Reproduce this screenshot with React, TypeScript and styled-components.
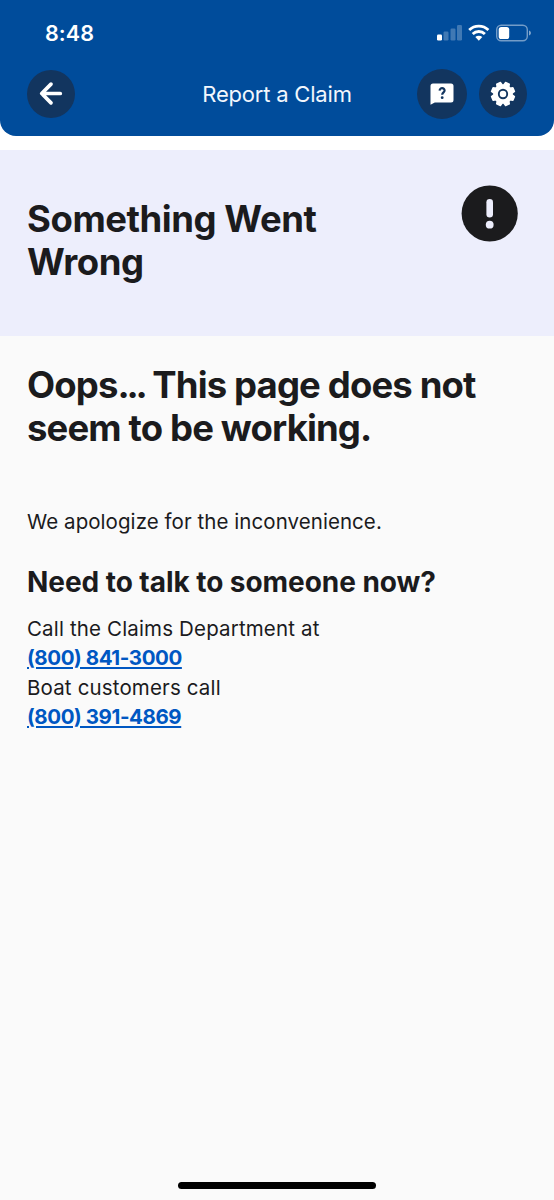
import React from "react";
import styled, { createGlobalStyle } from "styled-components";

const GlobalStyle = createGlobalStyle`
  * { box-sizing: border-box; }
  body { margin: 0; background: #fafafa; font-family: Inter, "Liberation Sans", sans-serif; color: #1b1b1d; }
  h1, h2, h3, p { margin: 0; }
`;

const Screen = styled.div`
  display: flex;
  flex-direction: column;
  height: 1200px;
  background: #fafafa;
`;

const HeaderWrap = styled.div`
  background: #fff;
  padding-bottom: 14px;
`;

const Header = styled.header`
  height: 136px;
  background: #004c9b;
  border-radius: 0 0 16px 16px;
`;

const StatusBar = styled.div`
  display: flex;
  align-items: center;
  justify-content: space-between;
  height: 66px;
  padding: 0 23px 0 45px;
`;

const Clock = styled.span`
  color: #fff;
  font-size: 21.5px;
  font-weight: 580;
  line-height: 26px;
  letter-spacing: 0.1px;
`;

const NavBar = styled.nav`
  display: flex;
  align-items: center;
  height: 56px;
  padding: 0 27px;
`;

const Side = styled.div<{ $end?: boolean }>`
  display: flex;
  flex: 1;
  align-items: center;
  gap: 12px;
  justify-content: ${(p) => (p.$end ? "flex-end" : "flex-start")};
`;

const RoundButton = styled.button<{ $size: number }>`
  display: flex;
  align-items: center;
  justify-content: center;
  width: ${(p) => p.$size}px;
  height: ${(p) => p.$size}px;
  padding: 0;
  border: 0;
  border-radius: 50%;
  background: #12355f;
`;

const Title = styled.span`
  color: #f2f7fd;
  font-size: 22px;
  line-height: 28px;
  letter-spacing: -0.2px;
`;

const Hero = styled.section`
  display: flex;
  justify-content: space-between;
  align-items: flex-start;
  height: 186px;
  padding: 35px 36px 0 27px;
  background: #edeefc;
`;

const Heading = styled.h1<{ $tracking: number }>`
  font-size: 36.5px;
  font-weight: 700;
  line-height: 43px;
  letter-spacing: ${(p) => p.$tracking}px;
`;

const HeroHeading = styled(Heading)`
  width: 320px;
  padding-top: 13px;
`;

const Ellipsis = styled.span`
  letter-spacing: -3.2px;
`;

const Content = styled.main`
  flex: 1;
  padding: 28px 27px 0;
`;

const Apology = styled.p`
  margin-top: 57px;
  font-size: 20.5px;
  line-height: 29.5px;
  letter-spacing: 0.06px;
`;

const Subheading = styled.h3`
  margin-top: 28px;
  font-size: 28px;
  font-weight: 700;
  line-height: 34px;
  letter-spacing: -0.05px;
`;

const Contacts = styled.div`
  display: flex;
  flex-direction: column;
  align-items: flex-start;
  margin-top: 15px;
  font-size: 20.5px;
  line-height: 29.5px;
  letter-spacing: 0.15px;
`;

const Phone = styled.a`
  color: #0057c2;
  font-weight: 700;
  letter-spacing: -0.42px;
  text-decoration: underline;
  text-decoration-thickness: 1.5px;
  text-underline-offset: 2px;
`;

const HomeArea = styled.footer`
  display: flex;
  justify-content: center;
  height: 18px;
`;

const HomeIndicator = styled.div`
  width: 198px;
  height: 7px;
  border-radius: 4px;
  background: #000;
`;

const StatusIcons = () => (
  <svg width="95" height="20" viewBox="436 23.5 95 20" fill="#fff">
    <rect x="437" y="35" width="5" height="6" rx="1.2" />
    <g fillOpacity=".25">
      <rect x="443.5" y="32" width="5" height="9" rx="1.2" />
      <rect x="450.5" y="29" width="5" height="12" rx="1.2" />
      <rect x="457" y="25.5" width="5" height="15.5" rx="1.2" />
    </g>
    <g fill="none" stroke="#fff" strokeWidth="2.8">
      <path d="M469.2 30.6a13.8 13.8 0 0 1 19.2 0" />
      <path d="M472.7 34.5a8.7 8.7 0 0 1 12.2 0" />
    </g>
    <path d="M475.3 37.6a5 5 0 0 1 7 0L478.8 41.2z" />
    <rect x="496.7" y="25.7" width="30.6" height="15.6" rx="4.5" fill="none" stroke="#fff" strokeOpacity=".45" strokeWidth="1.4" />
    <rect x="498.7" y="27.5" width="10.5" height="12" rx="2.6" />
    <path d="M529 31c2.6.8 2.6 4.2 0 5z" fillOpacity=".5" />
  </svg>
);

const BackIcon = () => (
  <svg width="26" height="26" viewBox="0 0 26 26" fill="none" stroke="#fff" strokeWidth="3.7" strokeLinecap="round" strokeLinejoin="round">
    <path d="M22.3 12.5H4M13 3.1L3.7 12.5l9.3 9.4" />
  </svg>
);

const HelpIcon = () => (
  <svg width="24" height="22" viewBox="0 0 24 22">
    <path d="M3 .5h18A2.5 2.5 0 0 1 23.5 3v14a2.5 2.5 0 0 1-2.5 2.5H4.800L.5 21.800V3A2.5 2.5 0 0 1 3 .5z" fill="#fff" />
    <path d="M9.600 7.600c.1-3.400 5.100-3.100 5 0 0 1.700-2.400 1.900-2.400 4.100" fill="none" stroke="#12355f" strokeWidth="2.2" />
    <circle cx="12.2" cy="14.700" r="1.400" fill="#12355f" />
  </svg>
);

const GearIcon = () => (
  <svg width="26" height="26" viewBox="-13 -13 26 26">
    <circle r="9.800" fill="#fff" />
    {[0, 45, 90, 135, 180, 225, 270, 315].map((a) => (
      <path key={a} d="M-3.500-8.500L-2.700-11.800Q-2.500-12.300-2-12.300H2Q2.500-12.300 2.700-11.800L3.500-8.500z" fill="#fff" transform={`rotate(${a + 22.5})`} />
    ))}
    <circle r="4.200" fill="none" stroke="#12355f" strokeWidth="1.900" />
  </svg>
);

const AlertIcon = () => (
  <svg width="57" height="57" viewBox="0 0 57 57">
    <circle cx="28.700" cy="28.500" r="28.100" fill="#1b1b1d" />
    <rect x="25.400" y="14" width="6.600" height="18.500" rx="3.300" fill="#edeefc" />
    <circle cx="28.700" cy="39.700" r="3.900" fill="#edeefc" />
  </svg>
);

export default function App() {
  return (
    <Screen>
      <GlobalStyle />
      <HeaderWrap>
        <Header>
          <StatusBar>
            <Clock>8:48</Clock>
            <StatusIcons />
          </StatusBar>
          <NavBar>
            <Side>
              <RoundButton $size={48} aria-label="Back"><BackIcon /></RoundButton>
            </Side>
            <Title>Report a Claim</Title>
            <Side $end>
              <RoundButton $size={50} aria-label="Help"><HelpIcon /></RoundButton>
              <RoundButton $size={48} aria-label="Settings"><GearIcon /></RoundButton>
            </Side>
          </NavBar>
        </Header>
      </HeaderWrap>
      <Hero>
        <HeroHeading $tracking={-0.45}>Something Went<br />Wrong</HeroHeading>
        <AlertIcon />
      </Hero>
      <Content>
        <Heading as="h2" $tracking={-0.86}>Oops<Ellipsis>...</Ellipsis> This page does not<br />seem to be working.</Heading>
        <Apology>We apologize for the inconvenience.</Apology>
        <Subheading>Need to talk to someone now?</Subheading>
        <Contacts>
          <span>Call the Claims Department at</span>
          <Phone href="tel:8008413000">(800) 841-3000</Phone>
          <span>Boat customers call</span>
          <Phone href="tel:8003914869">(800) 391-4869</Phone>
        </Contacts>
      </Content>
      <HomeArea><HomeIndicator /></HomeArea>
    </Screen>
  );
}
